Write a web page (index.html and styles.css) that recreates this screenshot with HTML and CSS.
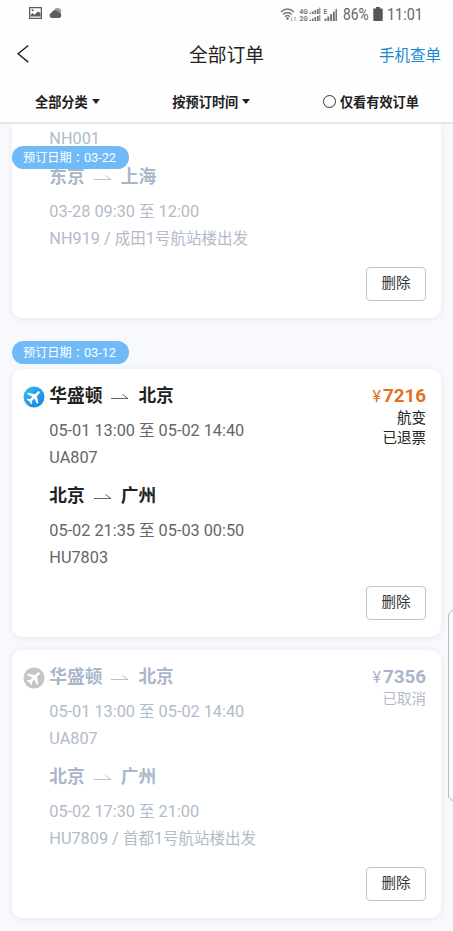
FILE: index.html
```html
<!DOCTYPE html>
<html lang="zh-CN">
<head>
<meta charset="utf-8">
<title>全部订单</title>
<link rel="stylesheet" href="styles.css">
</head>
<body>
<svg class="defs" width="0" height="0" aria-hidden="true">
  <defs>
    <linearGradient id="blue" x1="0" y1="0" x2="1" y2="1"><stop offset="0" stop-color="#35bdf2"/><stop offset="1" stop-color="#1683dc"/></linearGradient>
    <symbol id="plane" viewBox="0 0 22 22"><g transform="rotate(45 11 11)"><path fill="#fff" d="M11 3.3c.8 0 1.3.8 1.3 1.8v3.2l5.9 3.8v1.7l-5.9-1.9v3.4l1.9 1.5v1.4L11 17.3l-3.2.9v-1.4l1.9-1.5v-3.4l-5.9 1.9v-1.7l5.9-3.8V5.100c0-1 .5-1.800 1.300-1.800z"/></g></symbol>
    <symbol id="arrow" viewBox="0 0 18 8"><path fill="none" stroke="currentColor" stroke-width="1" d="M0 5.500h17L11.500 1.500"/></symbol>
  </defs>
</svg>
<header class="top">
  <div class="status">
    <svg class="s-left" width="36" height="14" viewBox="0 0 36 14">
      <path fill="#5e5e5e" fill-rule="evenodd" d="M1 1h13v12H1zM2.300 2.300v9.400h10.400V2.300z"/>
      <path fill="#5e5e5e" d="M2.500 10.500V9l2-2 2 1.700 3.500-3.200 2.500 1.500v3.500z"/><circle cx="4.600" cy="4.300" r="1" fill="#5e5e5e"/>
      <circle cx="29.500" cy="5.500" r="3.500" fill="#999"/><path fill="#5e5e5e" d="M23.500 12a2.800 2.800 0 0 1-.1-5.300A4 4 0 0 1 30.500 6a3.100 3.100 0 0 1 .8 6z"/>
    </svg>
    <div class="s-right">
      <svg width="60" height="18" viewBox="0 0 60 18">
        <g fill="none" stroke="#777" stroke-width="1.400"><path d="M1 6q6.500-6 13 0M3 8.400q4.500-4 9 0M5 10.700q2.500-2.200 5 0"/></g>
        <circle cx="7.500" cy="12.500" r="1.200" fill="#666"/>
        <path d="M11.500 11v4m-1-1l1 1 1-1M15 15v-4m-1 1l1-1 1 1" fill="none" stroke="#aaa" stroke-width=".8"/>
        <g fill="#777" font-family="Roboto" font-size="6.500" font-weight="700"><text x="19.500" y="7.500">4G</text><text x="19.500" y="14.800">2G</text><text x="43.500" y="7.500" font-size="6.500">E</text></g>
        <g fill="#777" transform="translate(0 -1)"><path d="M29.500 7.500h1.700V9h-1.700zM32 6.500h1.700V9H32zM34.500 5h1.700v4h-1.700zM37 4h1.700v5H37zM39.300 2.500h1V9h-1zM29.500 14.500h1.700V16h-1.700zM32 13.500h1.700V16H32zM34.500 12h1.700v4h-1.700zM37 11h1.700v5H37zM39.300 9.800h1V16h-1z"/><path d="M44.500 13.500h2V16h-2zM47.300 11.500h2V16h-2zM50.100 9h2v7h-2zM52.900 6.500h2V16h-2zM55.500 4h1.500v12h-1.500z"/></g>
      </svg>
      <span class="pct">86%</span>
      <svg class="bat" width="10" height="14" viewBox="0 0 10 14"><path fill="#555" d="M3 0h4v1.500h2q.7 0 .7.700v11q0 .8-.7.800H1q-.7 0-.7-.8v-11q0-.7.700-.7h2z"/></svg>
      <span class="time">11:01</span>
    </div>
  </div>
  <nav class="bar">
    <svg class="back" width="14" height="20" viewBox="0 0 14 20"><path d="M12.300 .5L2.100 8.800l10.200 8.300" fill="none" stroke="#222" stroke-width="1.400"/></svg>
    <h1>全部订单</h1>
    <a class="lookup">手机查单</a>
  </nav>
  <div class="filters">
    <span class="f1">全部分类<i class="caret"></i></span>
    <span class="f2">按预订时间<i class="caret"></i></span>
    <span class="f3"><i class="radio"></i>仅看有效订单</span>
  </div>
</header>
<main class="list">
  <section class="card dim cut">
    <div class="legs">
      <div class="leg"><p>NH001</p></div>
      <div class="leg">
        <h2>东京<svg class="arr"><use href="#arrow"/></svg>上海</h2>
        <p>03-28 09:30 <b>至</b> 12:00</p>
        <p>NH919 / <b>成田</b>1<b>号航站楼出发</b></p>
      </div>
    </div>
    <button>删除</button>
    <div class="pill floating">预订日期<i lang="zh-TW">：</i><span>03-22</span></div>
  </section>
  <div class="pill">预订日期<i lang="zh-TW">：</i><span>03-12</span></div>
  <section class="card">
    <div class="legs">
      <svg class="badge" viewBox="0 0 22 22"><circle cx="11" cy="11" r="10.500" fill="url(#blue)"/><use href="#plane"/></svg>
      <div class="price"><strong><small>¥</small>7216</strong><span>航变</span><span>已退票</span></div>
      <div class="leg">
        <h2>华盛顿<svg class="arr"><use href="#arrow"/></svg>北京</h2>
        <p>05-01 13:00 <b>至</b> 05-02 14:40</p>
        <p>UA807</p>
      </div>
      <div class="leg">
        <h2>北京<svg class="arr"><use href="#arrow"/></svg>广州</h2>
        <p>05-02 21:35 <b>至</b> 05-03 00:50</p>
        <p>HU7803</p>
      </div>
    </div>
    <button>删除</button>
  </section>
  <section class="card dim">
    <div class="legs">
      <svg class="badge" viewBox="0 0 22 22"><circle cx="11" cy="11" r="10.500" fill="#c5c5c7"/><use href="#plane"/></svg>
      <div class="price"><strong><small>¥</small>7356</strong><span>已取消</span></div>
      <div class="leg">
        <h2>华盛顿<svg class="arr"><use href="#arrow"/></svg>北京</h2>
        <p>05-01 13:00 <b>至</b> 05-02 14:40</p>
        <p>UA807</p>
      </div>
      <div class="leg">
        <h2>北京<svg class="arr"><use href="#arrow"/></svg>广州</h2>
        <p>05-02 17:30 <b>至</b> 21:00</p>
        <p>HU7809 / <b>首都</b>1<b>号航站楼出发</b></p>
      </div>
    </div>
    <button>删除</button>
  </section>
</main>
<div class="edge-handle"></div>
</body>
</html>
```
FILE: styles.css
```css
* { box-sizing: border-box; margin: 0; padding: 0; }
html, body { height: 931px; overflow: hidden; }
body {
  position: relative;
  display: flex;
  flex-direction: column;
  background: #f8f9fd;
  color: #222;
  font-family: Roboto, "Noto Sans CJK SC", sans-serif;
}
.defs { position: absolute; }
.top { flex: none; height: 124px; background: #fefefe; border-bottom: 2px solid #e7e7ea; }
.status { display: flex; justify-content: space-between; height: 28px; padding: 6px 30px 0 28px; color: #666; }
.s-right { display: flex; align-items: center; height: 17px; font-size: 16px; line-height: 17px; white-space: nowrap; }
.pct { display: block; width: 27px; margin-left: 3px; transform: scaleX(.86); transform-origin: left; }
.bat { margin: 0 4px 2px 3px; }
.time { display: block; width: 36px; transform: scaleX(.9); transform-origin: left; }
.bar { display: grid; grid-template-columns: 100px 1fr 100px; align-items: center; height: 54px; padding: 0 12px 0 16px; }
.bar h1 { padding: 2px 4px 0 0; font-size: 18.800px; font-weight: 400; text-align: center; line-height: 28px; }
.lookup { color: #1b88d2; font-size: 15.500px; line-height: 22px; padding-top: 1px; text-align: right; }
.filters { display: flex; align-items: center; height: 39px; padding: 0 34px 1px 35px; justify-content: space-between; font-size: 13.200px; font-weight: 700; }
.filters span { display: flex; align-items: center; }
.caret { margin-left: 4px; border: 4px solid transparent; border-top: 5px solid #222; border-bottom: 0; }
.radio { width: 13px; height: 13px; margin-right: 4px; border: 1px solid #333; border-radius: 50%; }
.list { flex: 1; min-height: 0; overflow: hidden; padding: 0 12px; }
.card {
  position: relative;
  display: flex;
  flex-direction: column;
  justify-content: space-between;
  width: 429px;
  height: 268px;
  margin-bottom: 13px;
  padding: 14px 15px 17px 11px;
  border-radius: 11px;
  background: #fff;
  box-shadow: 0 1px 6px rgba(70, 80, 110, .09);
}
.card.cut { height: 194px; margin-bottom: 23px; padding-top: 1px; border-radius: 0 0 11px 11px; }
.legs { position: relative; padding-left: 26.300px; }
.leg { margin-bottom: 12px; }
.leg h2 { display: flex; align-items: center; height: 26px; margin-bottom: 8px; padding-top: 1px; font-size: 17.700px; font-weight: 700; line-height: 25px; }
.arr { width: 18px; height: 8px; margin: 0 9px; color: #666; }
.leg p { height: 27px; line-height: 27px; font-size: 16.300px; color: #666; white-space: nowrap; }
.leg b { font-size: 15.500px; font-weight: 400; }
.badge { position: absolute; left: -.5px; top: 3px; width: 22px; height: 22px; }
.price { position: absolute; right: 0; top: 1px; display: flex; flex-direction: column; align-items: flex-end; font-size: 14.500px; line-height: 19.500px; color: #222; }
.price strong { height: 25px; font-size: 18.800px; line-height: 24px; font-weight: 700; color: #e1711c; }
.price small { margin-right: 2px; font-size: 16px; font-weight: 400; }
.dim h2, .dim .price strong { color: #a9b6cb; }
.dim .arr { color: #b9bfca; }
.dim .leg p, .dim .price { color: #b2bbc9; }
.card button {
  align-self: flex-end;
  width: 60px;
  height: 34px;
  padding-bottom: 1px;
  border: 1px solid #c4c4c8;
  border-radius: 4px;
  background: #fff;
  color: #333;
  font: 14.500px/31px Roboto, "Noto Sans CJK SC", sans-serif;
}
.pill { display: flex; align-items: center; width: 117px; height: 23px; margin-bottom: 5px; padding: 0 0 0 11px; border-radius: 12px; background: #70bbf7; color: #fff; font-size: 12.200px; line-height: 22px; white-space: nowrap; }
.pill i { font-family: "Noto Sans CJK TC", sans-serif; font-style: normal; }
.pill span { font-size: 12.700px; }
.floating { position: absolute; left: 0; top: 22px; margin: 0; }
.edge-handle { position: absolute; right: -8px; top: 610px; width: 13px; height: 191px; border: 1px solid #b9b9bd; border-radius: 6px; background: #fbfbfd; }
```
